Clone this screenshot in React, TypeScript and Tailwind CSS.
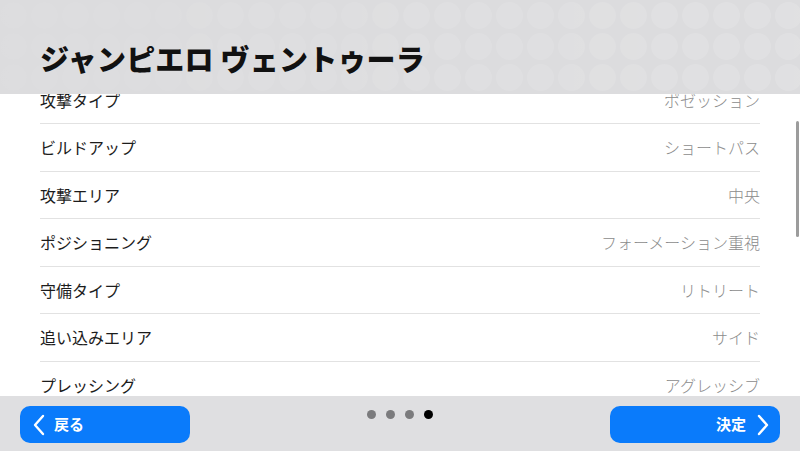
import React from 'react';

const rows = [
  { label: '攻撃タイプ', value: 'ポゼッション' },
  { label: 'ビルドアップ', value: 'ショートパス' },
  { label: '攻撃エリア', value: '中央' },
  { label: 'ポジショニング', value: 'フォーメーション重視' },
  { label: '守備タイプ', value: 'リトリート' },
  { label: '追い込みエリア', value: 'サイド' },
  { label: 'プレッシング', value: 'アグレッシブ' },
];

const HeaderPattern = () => (
  <svg className="absolute inset-0" width="800" height="94" viewBox="0 0 800 94">
    <defs>
      <pattern id="dots" x="-2" y="1" width="31" height="31" patternUnits="userSpaceOnUse">
        <circle cx="15.5" cy="14.5" r="13.5" fill="#ffffff" />
      </pattern>
      <linearGradient id="fade" x1="0" y1="0" x2="1" y2="0">
        <stop offset="0" stopColor="#fff" stopOpacity="0.03" />
        <stop offset="0.5" stopColor="#fff" stopOpacity="0.09" />
        <stop offset="1" stopColor="#fff" stopOpacity="0.14" />
      </linearGradient>
      <mask id="fadeMask">
        <rect width="800" height="94" fill="url(#fade)" />
      </mask>
    </defs>
    <rect width="800" height="94" fill="url(#dots)" mask="url(#fadeMask)" />
  </svg>
);

const Chevron = ({ dir }: { dir: 'left' | 'right' }) => (
  <svg width="14" height="22" viewBox="0 0 14 22">
    <polyline
      points={dir === 'left' ? '11,2 3,11 11,20' : '3,2 11,11 3,20'}
      fill="none"
      stroke="#ffffff"
      strokeWidth="2.4"
      strokeLinecap="round"
      strokeLinejoin="round"
    />
  </svg>
);

const App = () => {
  return (
    <div
      className="relative w-[800px] h-[451px] overflow-hidden bg-white"
      style={{ fontFamily: '"Noto Sans CJK JP", "Noto Sans", sans-serif' }}
    >
      {/* scrolled list */}
      <div className="pt-[76.5px] px-[40px]">
        {rows.map((row) => (
          <div
            key={row.label}
            className="flex items-center justify-between h-[47.5px] border-b border-[#e2e2e2]"
          >
            <span className="text-[16px] text-[#1c1c1c]">{row.label}</span>
            <span className="text-[16px] font-light text-[#8c8c8c]">{row.value}</span>
          </div>
        ))}
      </div>

      {/* header */}
      <div className="absolute top-0 left-0 w-[800px] h-[94px] bg-[#dcdcde] overflow-hidden">
        <HeaderPattern />
        <h1 className="relative pl-[40px] pt-[44px] text-[29px] font-black leading-none text-[#111111] tracking-[0.2px]">
          ジャンピエロ ヴェントゥーラ
        </h1>
      </div>

      {/* scrollbar */}
      <div className="absolute right-[1px] top-[121px] w-[3px] h-[116px] rounded-full bg-[#9c9c9c]" />

      {/* footer */}
      <div className="absolute bottom-0 left-0 w-[800px] h-[55px] bg-[#dfdfe1] flex items-start justify-between px-[20px] pt-[10px]">
        <button className="flex items-center gap-[8px] w-[170px] h-[37px] rounded-[10px] bg-[#0a7bfb] pl-[12px] text-white">
          <Chevron dir="left" />
          <span className="text-[15px] font-bold">戻る</span>
        </button>
        <div className="flex items-center gap-[10px] pt-[4px]">
          <span className="w-[9px] h-[9px] rounded-full bg-[#7b7b7d]" />
          <span className="w-[9px] h-[9px] rounded-full bg-[#7b7b7d]" />
          <span className="w-[9px] h-[9px] rounded-full bg-[#7b7b7d]" />
          <span className="w-[9px] h-[9px] rounded-full bg-[#000000]" />
        </div>
        <button className="flex items-center justify-end gap-[10px] w-[170px] h-[37px] rounded-[10px] bg-[#0a7bfb] pr-[10px] text-white">
          <span className="text-[15px] font-bold">決定</span>
          <Chevron dir="right" />
        </button>
      </div>
    </div>
  );
};

export default App;
